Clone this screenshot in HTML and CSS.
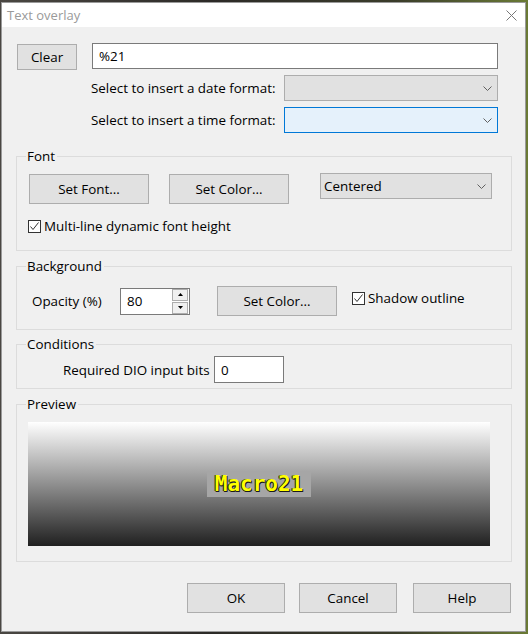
FILE: index.html
```html
<!DOCTYPE html>
<html lang="en">
<head>
<meta charset="utf-8">
<title>Text overlay</title>
<link rel="stylesheet" href="styles.css">
</head>
<body>
<div class="window">
  <div class="titlebar">
    <span class="title">Text overlay</span>
    <svg class="close" width="11" height="11" viewBox="0 0 11 11"><path d="M0.5 0.5L10.5 10.5M10.5 0.5L0.5 10.5" stroke="#777" stroke-width="1" fill="none"/></svg>
  </div>
  <div class="content">
    <div class="text-row">
      <button class="btn btn-clear">Clear</button>
      <div class="edit edit-text">%21</div>
    </div>
    <div class="format-row">
      <span class="label">Select to insert a date format:</span>
      <div class="combo combo-disabled">
        <svg class="chev" width="9" height="5" viewBox="0 0 9 5"><path d="M0.5 0.5L4.5 4.5L8.5 0.5" stroke="#606060" fill="none"/></svg>
      </div>
    </div>
    <div class="format-row">
      <span class="label">Select to insert a time format:</span>
      <div class="combo combo-focus">
        <svg class="chev" width="9" height="5" viewBox="0 0 9 5"><path d="M0.5 0.5L4.5 4.5L8.5 0.5" stroke="#606060" fill="none"/></svg>
      </div>
    </div>

    <fieldset class="group group-font">
      <legend>Font</legend>
      <div class="font-row">
        <button class="btn btn-wide">Set Font...</button>
        <button class="btn btn-wide btn-gap">Set Color...</button>
        <div class="combo combo-align">
          <span>Centered</span>
          <svg class="chev" width="9" height="5" viewBox="0 0 9 5"><path d="M0.5 0.5L4.5 4.5L8.5 0.5" stroke="#606060" fill="none"/></svg>
        </div>
      </div>
      <div class="check check-multiline">
        <span class="box"><svg width="11" height="11" viewBox="0 0 11 11"><path d="M1.5 5.5L4 8.5L9.5 1.5" stroke="#333" stroke-width="1" fill="none"/></svg></span>
        <span>Multi-line dynamic font height</span>
      </div>
    </fieldset>

    <fieldset class="group group-bg">
      <legend>Background</legend>
      <div class="bg-row">
        <span class="label label-opacity">Opacity (%)</span>
        <div class="spin">
          <div class="edit spin-edit">80</div>
          <div class="spin-buttons">
            <span class="spin-btn"><svg width="5" height="3" viewBox="0 0 5 3"><path d="M2.5 0L5 3H0Z" fill="#000"/></svg></span>
            <span class="spin-btn"><svg width="5" height="3" viewBox="0 0 5 3"><path d="M0 0H5L2.5 3Z" fill="#000"/></svg></span>
          </div>
        </div>
        <button class="btn btn-wide btn-bgcolor">Set Color...</button>
        <div class="check check-shadow">
          <span class="box"><svg width="11" height="11" viewBox="0 0 11 11"><path d="M1.5 5.5L4 8.5L9.5 1.5" stroke="#333" stroke-width="1" fill="none"/></svg></span>
          <span>Shadow outline</span>
        </div>
      </div>
    </fieldset>

    <fieldset class="group group-cond">
      <legend>Conditions</legend>
      <div class="cond-row">
        <span class="label label-dio">Required DIO input bits</span>
        <div class="edit edit-dio">0</div>
      </div>
    </fieldset>

    <fieldset class="group group-preview">
      <legend>Preview</legend>
      <div class="preview">
        <span class="macro">Macro21</span>
      </div>
    </fieldset>

    <div class="actions">
      <button class="btn btn-action btn-ok">OK</button>
      <button class="btn btn-action btn-cancel">Cancel</button>
      <button class="btn btn-action">Help</button>
    </div>
  </div>
</div>
</body>
</html>
```

FILE: styles.css
```css
* {
  box-sizing: border-box;
}

html, body {
  margin: 0;
  height: 100%;
}

body {
  background: linear-gradient(90deg, #4a4742 0%, #2c2a27 40%, #3a3c2a 75%, #6a7a35 100%);
  padding: 2px 2px 0 1px;
  font-family: "Open Sans", "Noto Sans", sans-serif;
  font-size: 13.4px;
  color: #000;
}

.window {
  width: 525px;
  height: 630px;
  border: 1px solid #9a9a9a;
  background: #f0f0f0;
  display: flex;
  flex-direction: column;
}

/* title bar */
.titlebar {
  height: 24px;
  background: #fff;
  display: flex;
  align-items: center;
  padding-left: 5px;
  padding-right: 8px;
}

.title {
  color: #9a9a9a;
  font-size: 13px;
  line-height: 16px;
}

.close {
  margin-left: auto;
  margin-top: 1px;
}

/* dialog body */
.content {
  padding: 16px 13px 0 14px;
  display: flex;
  flex-direction: column;
}

.btn {
  font: inherit;
  color: #000;
  background: #e1e1e1;
  border: 1px solid #adadad;
  border-radius: 0;
  padding: 0;
  margin: 0;
  line-height: 16px;
}

.edit {
  background: #fff;
  border: 1px solid #7a7a7a;
  line-height: 16px;
  padding-left: 6px;
  display: flex;
  align-items: center;
}

.label {
  line-height: 16px;
  white-space: nowrap;
}

.text-row {
  display: flex;
  align-items: flex-start;
}

.btn-clear {
  width: 60px;
  height: 26px;
  margin-left: 1px;
  margin-top: 1px;
}

.edit-text {
  width: 406px;
  height: 26px;
  margin-left: 15px;
}

.format-row {
  display: flex;
  align-items: center;
  padding-left: 75px;
  margin-top: 5px;
}

.format-row + .format-row {
  margin-top: 6px;
}

.format-row .combo {
  margin-left: auto;
  margin-right: 14px;
  width: 214px;
}

.combo {
  height: 26px;
  border: 1px solid #adadad;
  background: #e1e1e1;
  display: flex;
  align-items: center;
  padding: 0 5px 0 3px;
  line-height: 16px;
}

.combo .chev {
  margin-left: auto;
}

.combo-focus {
  background: #e5f1fb;
  border-color: #0078d7;
}

/* group boxes */
.group {
  margin: 0;
  border: 1px solid #dcdcdc;
  padding: 0 0 0 11px;
  min-width: 0;
}

.group legend {
  margin-left: -2px;
  padding: 0 2px 0 1px;
  line-height: 16px;
}

.group-font {
  margin-top: 15px;
  padding-top: 10px;
  padding-bottom: 16px;
}

.font-row {
  display: flex;
  align-items: flex-start;
}

.btn-wide {
  width: 120px;
  height: 30px;
}

.font-row .btn:first-child {
  margin-left: 1px;
}

.btn-gap {
  margin-left: 20px;
}

.combo-align {
  width: 172px;
  margin-left: 31px;
  margin-top: -1px;
}

.check {
  display: flex;
  align-items: center;
  line-height: 16px;
}

.check .box {
  width: 13px;
  height: 13px;
  border: 1px solid #333;
  background: #fff;
  display: flex;
  align-items: center;
  justify-content: center;
  margin-right: 3px;
}

.check-multiline {
  margin-top: 14px;
}

.group-bg {
  margin-top: 7px;
  padding-top: 12px;
  padding-bottom: 13px;
}

.bg-row {
  display: flex;
  align-items: center;
  height: 30px;
}

.label-opacity {
  margin-left: 4px;
  width: 88px;
}

.spin {
  display: flex;
  width: 70px;
  height: 27px;
  border: 1px solid #7a7a7a;
  background: #fff;
}

.spin-edit {
  border: none;
  flex: 1;
  padding-left: 6px;
}

.spin-buttons {
  display: flex;
  flex-direction: column;
  justify-content: center;
  gap: 1px;
  padding: 0 1px;
}

.spin-btn {
  width: 16px;
  height: 12px;
  border: 1px solid #adadad;
  background: #f0f0f0;
  display: flex;
  align-items: center;
  justify-content: center;
}

.btn-bgcolor {
  margin-left: 27px;
}

.check-shadow {
  margin-left: 15px;
  align-self: flex-start;
  margin-top: 4px;
}

.group-cond {
  margin-top: 6px;
  padding-top: 4px;
  padding-bottom: 5px;
}

.cond-row {
  display: flex;
  align-items: center;
  padding-left: 35px;
}

.label-dio {
  width: 151px;
}

.edit-dio {
  width: 70px;
  height: 27px;
}

.group-preview {
  margin-top: 7px;
  padding-top: 10px;
  padding-bottom: 15px;
}

.preview {
  width: 462px;
  height: 124px;
  background: linear-gradient(180deg, #ffffff 0%, #202020 100%);
  display: flex;
  align-items: center;
  justify-content: center;
}

.macro {
  background: #a6a6a6;
  width: 104px;
  height: 26px;
  display: flex;
  align-items: center;
  justify-content: center;
  font-family: "DejaVu Sans Mono", "Liberation Mono", monospace;
  font-size: 21px;
  font-weight: bold;
  line-height: 26px;
  color: #ffff00;
  text-shadow: -1px 0 0 #1a1a1a, 1px 1px 0 #1a1a1a, 0 1px 0 #1a1a1a;
}

.actions {
  display: flex;
  justify-content: flex-end;
  margin-top: 21px;
  padding-right: 1px;
}

.btn-action {
  width: 98px;
  height: 30px;
}

.btn-ok {
  margin-right: 14px;
}

.btn-cancel {
  margin-right: 16px;
}
```
